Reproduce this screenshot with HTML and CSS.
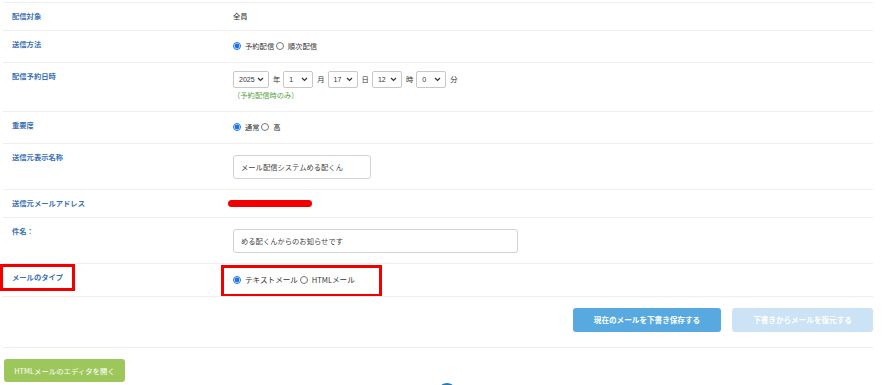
FILE: index.html
```html
<!DOCTYPE html>
<html lang="ja">
<head>
	<meta charset="UTF-8">
	<title>メール作成</title>
	<link rel="stylesheet" href="styles.css">
</head>
<body>
	<div class="form">
		<div class="row">
			<div class="label">配信対象</div>
			<div class="value">全員</div>
		</div>

		<div class="row row-radio">
			<div class="label">送信方法</div>
			<div class="value">
				<label class="radio"><input type="radio" name="method" checked>予約配信</label>
				<label class="radio"><input type="radio" name="method">順次配信</label>
			</div>
		</div>

		<div class="row">
			<div class="label">配信予約日時</div>
			<div class="value">
				<div class="dates">
					<select class="sel sel-year"><option>2025</option></select><span class="unit">年</span>
					<select class="sel"><option>1</option></select><span class="unit">月</span>
					<select class="sel"><option>17</option></select><span class="unit">日</span>
					<select class="sel"><option>12</option></select><span class="unit">時</span>
					<select class="sel"><option>0</option></select><span class="unit">分</span>
				</div>
				<div class="hint">（予約配信時のみ）</div>
			</div>
		</div>

		<div class="row row-radio">
			<div class="label">重要度</div>
			<div class="value">
				<label class="radio"><input type="radio" name="level" checked>通常</label>
				<label class="radio"><input type="radio" name="level">高</label>
			</div>
		</div>

		<div class="row">
			<div class="label">送信元表示名称</div>
			<div class="value">
				<input class="text text-short" type="text" value="メール配信システムめる配くん">
			</div>
		</div>

		<div class="row">
			<div class="label">送信元メールアドレス</div>
			<div class="value">
				<div class="redact"></div>
			</div>
		</div>

		<div class="row">
			<div class="label">件名：</div>
			<div class="value">
				<input class="text text-long" type="text" value="める配くんからのお知らせです">
			</div>
		</div>

		<div class="row row-type">
			<div class="label">メールのタイプ</div>
			<div class="value">
				<label class="radio"><input type="radio" name="type" checked>テキストメール</label>
				<label class="radio"><input type="radio" name="type">HTMLメール</label>
			</div>
			<div class="mark mark-label"></div>
			<div class="mark mark-value"></div>
		</div>

		<div class="row row-buttons">
			<button class="btn btn-save">現在のメールを下書き保存する</button>
			<button class="btn btn-restore">下書きからメールを復元する</button>
		</div>
	</div>

	<button class="btn btn-editor">HTMLメールのエディタを開く</button>
	<div class="circle"></div>
</body>
</html>
```

FILE: styles.css
```css
*{
	margin:0;
	padding:0;
	box-sizing:border-box;
}
body{
	background:#fff;
	font-family:"Noto Sans CJK JP","Liberation Sans",sans-serif;
	font-size:7.3px;
	color:#333;
	padding-top:2px;
}
.form{
	width:870px;
	margin-left:3px;
}
.row{
	display:grid;
	grid-template-columns:221px 1fr;
	padding:8px 9px;
	border-top:1px solid #eeeeee;
	line-height:11px;
	position:relative;
}
.label{
	color:#3a70b6;
	font-weight:bold;
}
.row-radio .value{
	line-height:14px;
}
.radio{
	display:inline-flex;
	align-items:center;
}
.radio input{
	width:8px;
	height:8px;
	margin:0 4px 0 0;
	accent-color:#1a73e8;
}

.dates{
	display:flex;
	align-items:center;
}
.sel{
	appearance:none;
	-webkit-appearance:none;
	width:30px;
	height:17px;
	border:1px solid #c8c8c8;
	border-radius:2px;
	background:#fff url("data:image/svg+xml,%3Csvg xmlns='http://www.w3.org/2000/svg' width='7' height='5' viewBox='0 0 7 5'%3E%3Cpath d='M1 1l2.5 2.5 2.5-2.5' fill='none' stroke='%23333' stroke-width='1.2'/%3E%3C/svg%3E") no-repeat right 4px center;
	font-family:"Liberation Sans",sans-serif;
	font-size:7px;
	color:#333;
	padding-left:5px;
	margin-right:4px;
}
.sel-year{
	width:36px;
}
.unit{
	margin-right:3px;
}
.hint{
	color:#58a33f;
	margin-top:2px;
	margin-bottom:2px;
}

.text{
	display:block;
	height:24px;
	margin:3px 0 2px;
	border:1px solid #d2d2d2;
	border-radius:3px;
	padding:0 7px;
	font-family:inherit;
	font-size:7.3px;
	color:#444;
	background:#fff;
}
.text-short{
	width:138px;
}
.text-long{
	width:285px;
}
.redact{
	width:84px;
	height:7px;
	margin:2px 0 0 -5px;
	background:#f20000;
	border-radius:4px;
}

.row-type .value{
	line-height:15px;
	font-size:7.6px;
}
.mark{
	position:absolute;
	border:3px solid #f20000;
	top:0;
}
.mark-label{
	left:-3px;
	width:75px;
	height:27px;
}
.mark-value{
	top:1px;
	left:218px;
	width:161px;
	height:32px;
}

.row-buttons{
	display:flex;
	justify-content:flex-end;
	gap:11px;
	padding:11px 0 15px;
	border-bottom:1px solid #eeeeee;
}
.btn{
	border:none;
	border-radius:3px;
	height:24px;
	color:#fff;
	font-family:inherit;
	font-weight:bold;
	font-size:7.6px;
}
.btn-save{
	width:148px;
	background:#57a9df;
}
.btn-restore{
	width:141px;
	background:#cbe3f5;
}
.btn-editor{
	display:block;
	margin:11px 0 0 4px;
	width:121px;
	height:23px;
	background:#9ec75b;
	font-weight:normal;
	font-size:7.4px;
}
.circle{
	width:20px;
	height:20px;
	margin:1px 0 0 437px;
	border-radius:50%;
	background:#1a7bbd;
}
```
